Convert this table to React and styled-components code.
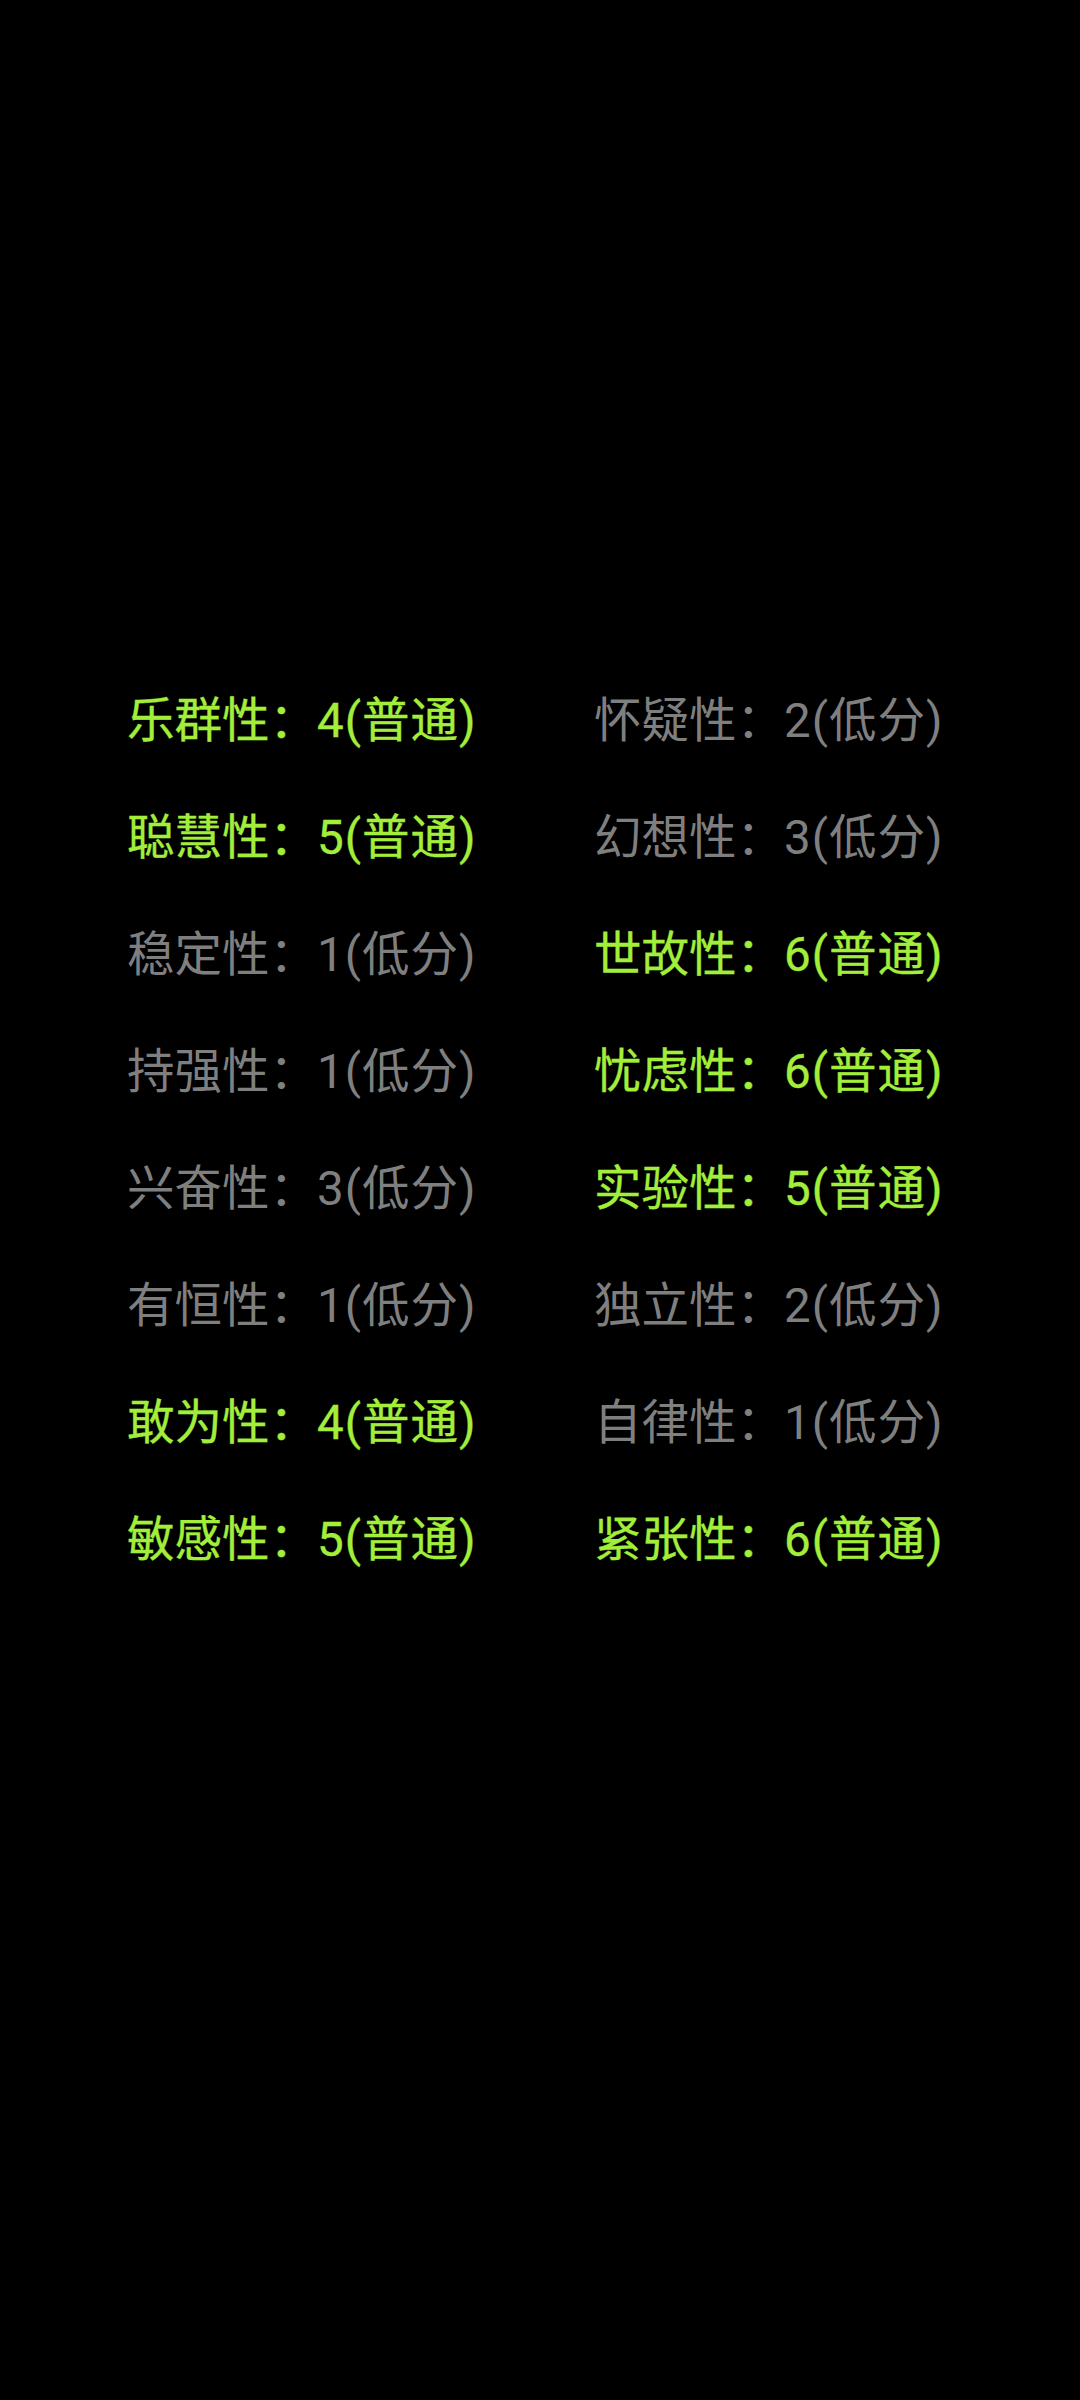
import React from 'react';
import styled, { createGlobalStyle } from 'styled-components';

const GlobalStyle = createGlobalStyle`
  html, body {
    margin: 0;
    padding: 0;
    background: #000;
  }
  body {
    font-family: Roboto, "Noto Sans CJK SC", sans-serif;
  }
`;

const Page = styled.div`
  width: 1080px;
  height: 2400px;
  background: #000;
  padding-top: 663px;
  box-sizing: border-box;
`;

const Grid = styled.div`
  display: grid;
  grid-template-columns: 467px 467px;
  padding-left: 127px;
`;

const Cell = styled.div`
  height: 117px;
  line-height: 117px;
  font-size: 47.5px;
  font-weight: 400;
  white-space: nowrap;
  color: ${(p) => (p.$high ? '#a3ee3a' : '#7f7f7f')};
  -webkit-text-stroke: ${(p) => (p.$high ? '0.35px #a3ee3a' : '0')};
`;

const Score = styled.span`
  letter-spacing: 1px;
`;

const traits = [
  ['乐群性', 4, '怀疑性', 2],
  ['聪慧性', 5, '幻想性', 3],
  ['稳定性', 1, '世故性', 6],
  ['持强性', 1, '忧虑性', 6],
  ['兴奋性', 3, '实验性', 5],
  ['有恒性', 1, '独立性', 2],
  ['敢为性', 4, '自律性', 1],
  ['敏感性', 5, '紧张性', 6],
];

function Trait({ name, score }) {
  const high = score >= 4;
  return (
    <Cell $high={high}>
      {name}：<Score>{score}({high ? '普通' : '低分'})</Score>
    </Cell>
  );
}

export default function App() {
  return (
    <>
      <GlobalStyle />
      <Page>
        <Grid>
          {traits.map(([a, sa, b, sb]) => (
            <React.Fragment key={a}>
              <Trait name={a} score={sa} />
              <Trait name={b} score={sb} />
            </React.Fragment>
          ))}
        </Grid>
      </Page>
    </>
  );
}
